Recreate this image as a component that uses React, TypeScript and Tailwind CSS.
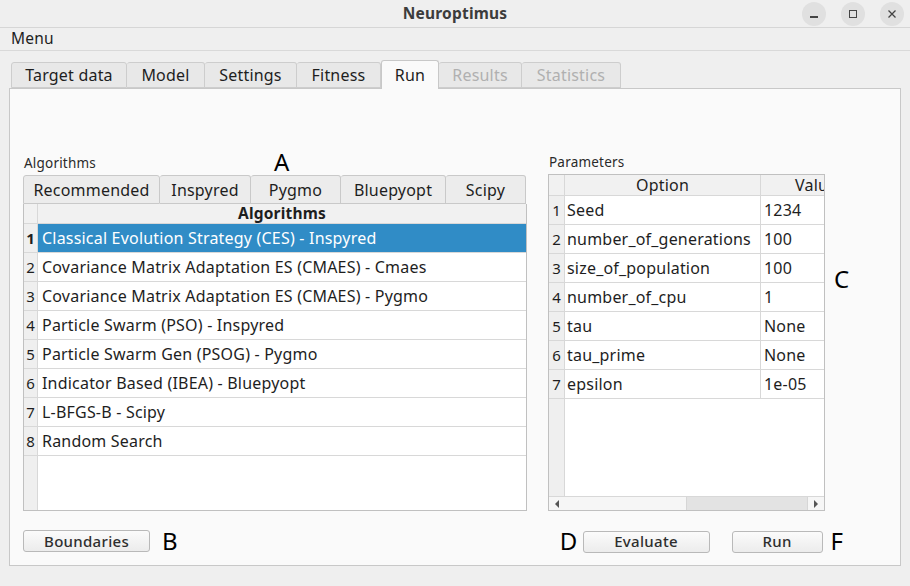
import React from "react";

const font = { fontFamily: '"Noto Sans", "Open Sans", sans-serif' };

const mainTabs = [
  { name: "Target data", w: "w-[116px]", state: "normal" },
  { name: "Model", w: "w-[78px]", state: "normal" },
  { name: "Settings", w: "w-[92px]", state: "normal" },
  { name: "Fitness", w: "w-[84px]", state: "normal" },
  { name: "Run", w: "w-[58px]", state: "active" },
  { name: "Results", w: "w-[83px]", state: "disabled" },
  { name: "Statistics", w: "w-[99px]", state: "disabled" },
];

const algoTabs = [
  { name: "Recommended", w: "w-[137px]" },
  { name: "Inspyred", w: "w-[91px]" },
  { name: "Pygmo", w: "w-[90px]" },
  { name: "Bluepyopt", w: "w-[105px]" },
  { name: "Scipy", w: "w-[80px]" },
];

const algorithms = [
  "Classical Evolution Strategy (CES) - Inspyred",
  "Covariance Matrix Adaptation ES (CMAES) - Cmaes",
  "Covariance Matrix Adaptation ES (CMAES) - Pygmo",
  "Particle Swarm (PSO) - Inspyred",
  "Particle Swarm Gen (PSOG) - Pygmo",
  "Indicator Based (IBEA) - Bluepyopt",
  "L-BFGS-B - Scipy",
  "Random Search",
];

const params = [
  ["Seed", "1234"],
  ["number_of_generations", "100"],
  ["size_of_population", "100"],
  ["number_of_cpu", "1"],
  ["tau", "None"],
  ["tau_prime", "None"],
  ["epsilon", "1e-05"],
];

function Marker({ children, className = "" }: { children: React.ReactNode; className?: string }) {
  return <span className={`text-[24px] leading-none text-black ${className}`}>{children}</span>;
}

function PushButton({ label, w }: { label: string; w: string }) {
  return (
    <button
      type="button"
      className={`${w} h-[22px] rounded-[3px] border border-[#b9b9b9] bg-gradient-to-b from-[#fbfbfb] to-[#ececec] text-[15px] font-medium tracking-[0.3px] text-[#2e2e2e] leading-none`}
    >
      {label}
    </button>
  );
}

export default function App() {
  return (
    <div className="w-[910px] h-[586px] bg-[#efefef] flex flex-col overflow-hidden text-[#1e1e1e] tracking-[0.2px]" style={font}>
      {/* title bar */}
      <div className="h-[28px] flex items-center relative border-b border-[#d6d6d6]">
        <div className="flex-1 text-center text-[15.5px] font-bold text-[#3c3c3c]">Neuroptimus</div>
        <div className="absolute right-[6px] top-[2px] flex gap-[15px]">
          <span className="w-[24px] h-[24px] rounded-full bg-[#e0e0e0] flex items-center justify-center">
            <span className="block w-[8px] h-[1.5px] bg-[#444] mt-[6px]" />
          </span>
          <span className="w-[24px] h-[24px] rounded-full bg-[#e0e0e0] flex items-center justify-center">
            <span className="block w-[8px] h-[8px] border border-[#444]" />
          </span>
          <span className="w-[24px] h-[24px] rounded-full bg-[#e0e0e0] flex items-center justify-center">
            <svg width="10" height="10" viewBox="0 0 10 10">
              <path d="M1.5 1.5 L8.5 8.5 M8.5 1.5 L1.5 8.5" stroke="#444" strokeWidth="1.3" />
            </svg>
          </span>
        </div>
      </div>

      {/* menu bar */}
      <div className="h-[23px] flex items-center px-[11px] text-[15.5px] border-b border-[#d9d9d9]">Menu</div>

      {/* tab bar */}
      <div className="px-[9px] pt-[9px] flex flex-col">
        <div className="flex pl-[2px] h-[28px] items-end">
          {mainTabs.map((t) =>
            t.state === "active" ? (
              <div
                key={t.name}
                className={`${t.w} h-[29px] -mb-px bg-[#fafafa] border border-b-0 border-[#c8c8c8] rounded-t-[3px] flex items-center justify-center text-[16px] relative z-10`}
              >
                {t.name}
              </div>
            ) : (
              <div
                key={t.name}
                className={`${t.w} h-[26px] bg-[#e8e8e8] border border-[#cdcdcd] border-l-0 first:border-l rounded-t-[3px] flex items-center justify-center text-[16px] ${
                  t.state === "disabled" ? "text-[#b0b0b0]" : ""
                }`}
              >
                {t.name}
              </div>
            )
          )}
        </div>

        {/* panel */}
        <div className="h-[478px] bg-[#fafafa] border border-[#c8c8c8] flex flex-col pl-[13px] pt-[66px]">
          <div className="flex">
            {/* algorithms */}
            <div className="w-[504px] flex flex-col">
              <div className="h-[20px] relative">
                <span className="text-[13.5px] text-[#2a2a2a] absolute left-[1px] top-[-2px]">Algorithms</span>
                <Marker className="absolute left-[251px] top-[-5px]">A</Marker>
              </div>
              <div className="flex h-[29px]">
                {algoTabs.map((t, i) => (
                  <div
                    key={t.name}
                    className={`${t.w} border border-[#c9c9c9] ${i > 0 ? "border-l-0" : ""} rounded-t-[3px] bg-[#ececec] flex items-center justify-center text-[16px]`}
                  >
                    {t.name}
                  </div>
                ))}
              </div>
              <div className="h-[307px] border border-t-0 border-[#c0c0c0] bg-white flex flex-col">
                <div className="h-[20px] flex bg-[#f1f1f1] border-b border-[#d8d8d8]">
                  <div className="w-[14px] border-r border-[#d8d8d8]" />
                  <div className="flex-1 text-center text-[15.5px] font-bold leading-[19px]">Algorithms</div>
                </div>
                <div className="flex-1 flex">
                  <div className="w-[14px] bg-[#efefef] border-r border-[#d8d8d8] flex flex-col">
                    {algorithms.map((_, i) => (
                      <div
                        key={i}
                        className={`h-[29px] border-b border-[#d8d8d8] flex items-center justify-center text-[15px] tracking-normal ${i === 0 ? "font-bold" : ""}`}
                      >
                        {i + 1}
                      </div>
                    ))}
                  </div>
                  <div className="flex-1 flex flex-col">
                    {algorithms.map((a, i) => (
                      <div
                        key={a}
                        className={`h-[29px] border-b border-[#d8d8d8] flex items-center pl-[4px] text-[16px] whitespace-nowrap ${
                          i === 0 ? "bg-[#308cc6] text-white border-[#308cc6]" : ""
                        }`}
                      >
                        {a}
                      </div>
                    ))}
                  </div>
                </div>
              </div>
            </div>

            {/* parameters */}
            <div className="ml-[21px] w-[277px] flex flex-col">
              <div className="h-[19px] text-[13.5px] text-[#2a2a2a] pl-[1px] leading-[15px]">Parameters</div>
              <div className="h-[337px] border border-[#c0c0c0] bg-white flex flex-col overflow-hidden">
                <div className="h-[21px] flex bg-[#f1f1f1] border-b border-[#d8d8d8] text-[16px] shrink-0">
                  <div className="w-[16px] border-r border-[#d8d8d8]" />
                  <div className="w-[196px] text-center border-r border-[#d8d8d8] leading-[20px]">Option</div>
                  <div className="flex-1 pl-[34px] leading-[20px] overflow-hidden whitespace-nowrap">Valu</div>
                </div>
                <div className="flex-1 flex">
                  <div className="w-[16px] bg-[#efefef] border-r border-[#d8d8d8] flex flex-col">
                    {params.map((_, i) => (
                      <div key={i} className="h-[29px] border-b border-[#d8d8d8] flex items-center justify-center text-[15px] tracking-normal">
                        {i + 1}
                      </div>
                    ))}
                  </div>
                  <div className="flex-1 flex flex-col">
                    {params.map(([o, v]) => (
                      <div key={o} className="h-[29px] flex border-b border-[#d8d8d8] text-[16px]">
                        <div className="w-[196px] border-r border-[#d8d8d8] pl-[2px] flex items-center whitespace-nowrap">{o}</div>
                        <div className="flex-1 pl-[3px] flex items-center">{v}</div>
                      </div>
                    ))}
                  </div>
                </div>
                {/* horizontal scrollbar */}
                <div className="h-[14px] flex border-t border-[#d8d8d8] bg-[#f6f6f6] shrink-0">
                  <div className="w-[16px] flex items-center justify-center">
                    <svg width="6" height="8" viewBox="0 0 6 8">
                      <path d="M5 0 L1 4 L5 8 Z" fill="#555" />
                    </svg>
                  </div>
                  <div className="w-[121px]" />
                  <div className="w-[122px] bg-[#e3e3e3] border-x border-[#d6d6d6]" />
                  <div className="flex-1 flex items-center justify-center">
                    <svg width="6" height="8" viewBox="0 0 6 8">
                      <path d="M1 0 L5 4 L1 8 Z" fill="#555" />
                    </svg>
                  </div>
                </div>
              </div>
            </div>

            <div className="pl-[9px] pt-[112px]">
              <Marker>C</Marker>
            </div>
          </div>

          {/* buttons */}
          <div className="flex items-center mt-[18px]">
            <PushButton label="Boundaries" w="w-[127px]" />
            <Marker className="ml-[12px]">B</Marker>
            <Marker className="ml-[382px]">D</Marker>
            <span className="ml-[5px]"><PushButton label="Evaluate" w="w-[127px]" /></span>
            <span className="ml-[22px]"><PushButton label="Run" w="w-[91px]" /></span>
            <Marker className="ml-[8px]">F</Marker>
          </div>
        </div>
      </div>
    </div>
  );
}
